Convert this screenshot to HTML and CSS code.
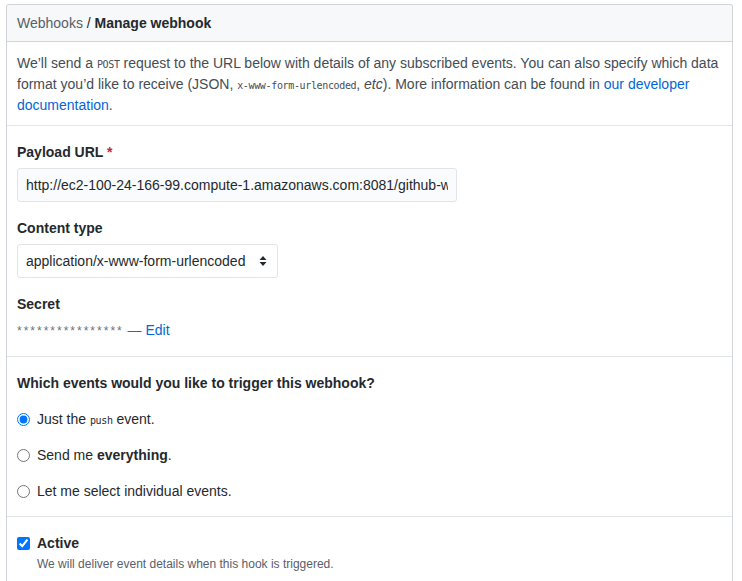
FILE: index.html
```html
<!DOCTYPE html>
<html>
<head>
<meta charset="utf-8">
<link rel="stylesheet" href="styles.css">
</head>
<body>
<div class="box">
  <div class="box-header">
    <span class="crumb">Webhooks</span> / <strong>Manage webhook</strong>
  </div>
  <div class="intro">
    We’ll send a <code>POST</code> request to the URL below with details of any subscribed events. You can also specify which data format you’d like to receive (JSON, <code>x-www-form-urlencoded</code>, <em>etc</em>). More information can be found in <a href="#">our developer documentation</a>.
  </div>
  <div class="section">
    <div class="field">
      <label class="label">Payload URL <span class="req">*</span></label>
      <input class="text-input" type="text" value="http://ec2-100-24-166-99.compute-1.amazonaws.com:8081/github-webhook/">
    </div>
    <div class="field">
      <label class="label">Content type</label>
      <div class="select">
        <span>application/x-www-form-urlencoded</span>
        <svg width="8" height="12" viewBox="0 0 8 12"><path d="M4 1 L7.5 5 H0.5 Z M4 11 L0.5 7 H7.5 Z" fill="#24292e"/></svg>
      </div>
    </div>
    <div class="field last">
      <label class="label">Secret</label>
      <div class="secret"><span class="stars">****************</span> — <a href="#">Edit</a></div>
    </div>
  </div>
  <div class="section events">
    <div class="label heading">Which events would you like to trigger this webhook?</div>
    <label class="radio"><input type="radio" name="ev" checked> <span>Just the <code>push</code> event.</span></label>
    <label class="radio"><input type="radio" name="ev"> <span>Send me <strong>everything</strong>.</span></label>
    <label class="radio"><input type="radio" name="ev"> <span>Let me select individual events.</span></label>
  </div>
  <div class="section active">
    <label class="check"><input type="checkbox" checked> <span class="label">Active</span></label>
    <div class="note">We will deliver event details when this hook is triggered.</div>
  </div>
</div>
</body>
</html>
```
FILE: styles.css
```css
html, body { margin: 0; padding: 0; background: #fff; }
body {
  font-family: "Liberation Sans", Arial, sans-serif;
  font-size: 14px;
  line-height: 21px;
  color: #24292e;
}
.box {
  margin: 4px 0 0 6px;
  width: 725px;
  border: 1px solid #d1d5da;
  border-bottom: none;
  border-radius: 3px 3px 0 0;
}
.box-header {
  background: #f6f8fa;
  border-bottom: 1px solid #d1d5da;
  padding: 8px 10px;
  height: 20px;
  line-height: 20px;
  border-radius: 3px 3px 0 0;
}
.crumb { color: #586069; }
.box-header strong { font-weight: 600; }
.intro {
  padding: 11px 10px 9px 10px;
  color: #444d56;
  border-bottom: 1px solid #e1e4e8;
}
code {
  font-family: "DejaVu Sans Mono", monospace;
  font-size: 10px;
  letter-spacing: -0.35px;
  line-height: 1;
}
a { color: #0366d6; text-decoration: none; }
.section {
  padding: 16px 10px 14px;
  border-bottom: 1px solid #e1e4e8;
}
.field { margin-bottom: 16px; }
.field.last { margin-bottom: 0; }
.label {
  display: block;
  font-weight: 600;
  color: #24292e;
  margin-bottom: 5px;
}
.req { color: #cb2431; }
.text-input {
  box-sizing: border-box;
  width: 440px;
  height: 34px;
  padding: 6px 8px;
  font: inherit;
  font-size: 14px;
  color: #24292e;
  background: #fafbfc;
  border: 1px solid #e1e4e8;
  border-radius: 3px;
  outline: none;
}
.select {
  box-sizing: border-box;
  width: 261px;
  height: 34px;
  padding: 0 10px 0 8px;
  display: flex;
  align-items: center;
  justify-content: space-between;
  background: #fff;
  border: 1px solid #e1e4e8;
  border-radius: 3px;
}
.secret { color: #586069; }
.stars { font-size: 12px; letter-spacing: 2px; color: #6a737d; }
.events .heading { margin-bottom: 15px; }
.radio {
  display: flex;
  align-items: center;
  height: 21px;
  margin-bottom: 15px;
  color: #24292e;
}
.radio:last-child { margin-bottom: 0; }
.radio input, .check input {
  margin: 0 7px 0 0;
  width: 13px;
  height: 13px;
}
.radio strong { font-weight: 600; }
.active { border-bottom: none; }
.check { display: flex; align-items: center; }
.check .label { margin: 0; }
.note {
  font-size: 12px;
  line-height: 20px;
  color: #586069;
  padding-left: 20px;
}
```
